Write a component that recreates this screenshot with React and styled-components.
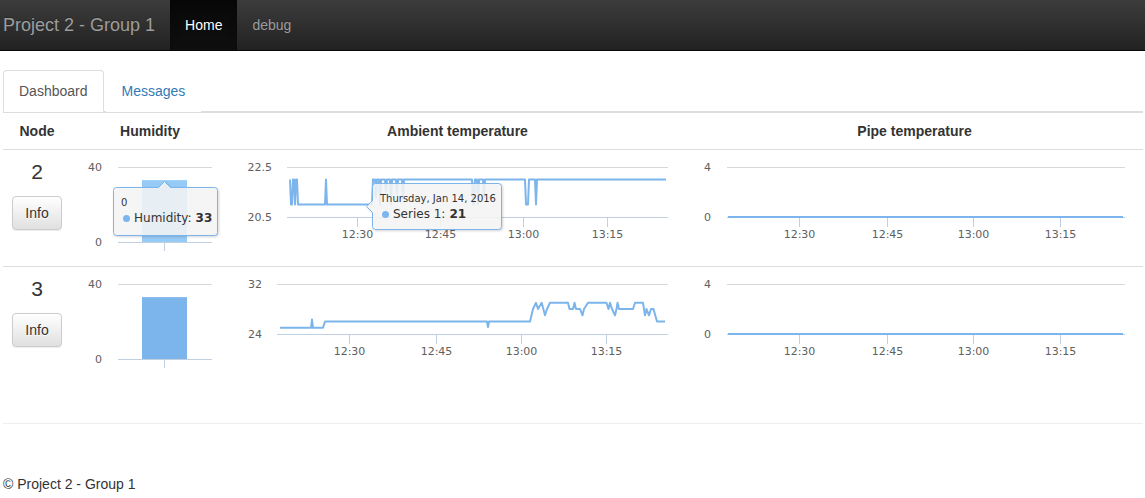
import React from "react"
import styled, { createGlobalStyle } from "styled-components"

const GlobalStyle = createGlobalStyle`
  * { box-sizing: border-box; }
  body {
    margin: 0;
    font-family: "Liberation Sans", Arial, sans-serif;
    font-size: 14px;
    line-height: 20px;
    color: #333;
    background: #fff;
  }
`

const BLUE = "#7cb5ec"

const Navbar = styled.nav`
  display: flex;
  height: 51px;
  background: linear-gradient(to bottom, #3c3c3c 0%, #222 100%);
  border-bottom: 1px solid #080808;
`

const Brand = styled.a`
  padding: 0 15px 0 3px;
  font-size: 18px;
  line-height: 50px;
  color: #9d9d9d;
  text-shadow: 0 -1px 0 rgba(0, 0, 0, 0.25);
`

const NavLink = styled.a`
  padding: 0 15px;
  line-height: 50px;
  color: ${({ $active }) => ($active ? "#fff" : "#9d9d9d")};
  background: ${({ $active }) =>
    $active ? "linear-gradient(to bottom, #080808 0%, #0f0f0f 100%)" : "none"};
  box-shadow: ${({ $active }) => ($active ? "inset 0 3px 9px rgba(0,0,0,.25)" : "none")};
  text-shadow: 0 -1px 0 rgba(0, 0, 0, 0.25);
`

const Main = styled.main`
  padding: 19px 2px 0 3px;
`

const Tabs = styled.ul`
  display: flex;
  margin: 0;
  padding: 0;
  list-style: none;
  border-bottom: 1px solid #ddd;
`

const Tab = styled.li`
  margin: 0 2px -1px 0;
  padding: 10px 15px;
  border: 1px solid ${({ $active }) => ($active ? "#ddd" : "transparent")};
  border-bottom-color: transparent;
  border-radius: 4px 4px 0 0;
  background: #fff;
  color: ${({ $active }) => ($active ? "#555" : "#337ab7")};
`

const Table = styled.div`
  display: flex;
  flex-direction: column;
  margin-bottom: 20px;
`

const Row = styled.div`
  display: grid;
  grid-template-columns: 68px 158px 1fr 1fr;
  border-top: ${({ $noTop }) => ($noTop ? "0" : "1px solid #ddd")};
`

const HeadRow = styled(Row)`
  border-bottom: 1px solid #ddd;
`

const Th = styled.div`
  padding: 8px;
  font-weight: bold;
  text-align: center;
`

const Cell = styled.div`
  position: relative;
  height: 116px;
`

const NodeCell = styled(Cell)`
  display: flex;
  flex-direction: column;
  align-items: center;
  padding-top: 8px;
`

const NodeNum = styled.div`
  font-size: 21px;
  line-height: 27px;
`

const InfoButton = styled.button`
  margin-top: 11px;
  padding: 6px 12px;
  font: 14px/20px "Liberation Sans", Arial, sans-serif;
  color: #333;
  background: linear-gradient(to bottom, #fff 0%, #e0e0e0 100%);
  border: 1px solid #ccc;
  border-radius: 4px;
  box-shadow: inset 0 1px 0 rgba(255, 255, 255, 0.15), 0 1px 1px rgba(0, 0, 0, 0.075);
  text-shadow: 0 1px 0 #fff;
`

const ChartSvg = styled.svg`
  display: block;
  overflow: visible;
`

const AxisText = styled.text`
  font-family: "DejaVu Sans", Verdana, sans-serif;
  font-size: 11px;
  fill: #606060;
`

const Tooltip = styled.div`
  position: absolute;
  left: ${({ $x }) => $x}px;
  top: ${({ $y }) => $y}px;
  width: ${({ $w }) => $w}px;
  height: ${({ $h }) => $h}px;
  font-family: "DejaVu Sans", Verdana, sans-serif;
  color: #333;
  white-space: nowrap;
`

const TipShape = styled.svg`
  position: absolute;
  inset: 0;
  overflow: visible;
  filter: drop-shadow(1px 1px 1px rgba(0, 0, 0, 0.18));
`

const TipBody = styled.div`
  position: relative;
  padding: 9px 8px 0 8px;
`

const TipTitle = styled.div`
  font-size: 10px;
  line-height: 14px;
`

const TipLine = styled.div`
  display: flex;
  align-items: center;
  font-size: 12px;
  line-height: 16px;
  b { margin-left: 4px; }
`

const Dot = styled.span`
  flex: 0 0 7px;
  width: 7px;
  height: 7px;
  margin: 0 4px 0 2px;
  border-radius: 50%;
  background: ${BLUE};
`

const Rule = styled.hr`
  margin: 40px 0 20px;
  border: 0;
  border-top: 1px solid #eee;
`

const Footer = styled.footer`
  padding-top: 30px;
`

function calloutPath(w, h, side, pos) {
  const r = 3
  const W = w - 1
  const H = h - 1
  if (side === "top") {
    return `M${r} 0 L${pos - 6} 0 L${pos} -6 L${pos + 6} 0 L${W - r} 0 Q${W} 0 ${W} ${r} L${W} ${H - r} Q${W} ${H} ${W - r} ${H} L${r} ${H} Q0 ${H} 0 ${H - r} L0 ${r} Q0 0 ${r} 0 Z`
  }
  return `M${r} 0 L${W - r} 0 Q${W} 0 ${W} ${r} L${W} ${H - r} Q${W} ${H} ${W - r} ${H} L${r} ${H} Q0 ${H} 0 ${H - r} L0 ${pos + 6} L-6 ${pos} L0 ${pos - 6} L0 ${r} Q0 0 ${r} 0 Z`
}

const Tip = ({ x, y, w, h, side, pos, title, label, value }) => (
  <Tooltip $x={x} $y={y} $w={w} $h={h}>
    <TipShape width={w} height={h}>
      <g transform="translate(0.5 0.5)">
        <path d={calloutPath(w, h, side, pos)} fill="rgba(249,249,249,0.85)" stroke={BLUE} />
      </g>
    </TipShape>
    <TipBody>
      <TipTitle>{title}</TipTitle>
      <TipLine>
        <Dot />
        {label}:<b>{value}</b>
      </TipLine>
    </TipBody>
  </Tooltip>
)

const TIMES = ["12:30", "12:45", "13:00", "13:15"]

const LineChart = ({ width, colLeft, labelX, plotL, plotR, ticks, yLabels, min, max, points }) => {
  const toY = v => 67 - ((v - min) / (max - min)) * 50
  const d = points
    .map(([x, v], i) => `${i ? "L" : "M"}${(x - colLeft).toFixed(1)} ${toY(v).toFixed(1)}`)
    .join(" ")
  return (
    <ChartSvg width={width} height={116}>
      <line x1={plotL} x2={plotR} y1={17.5} y2={17.5} stroke="#d8d8d8" />
      <line x1={plotL} x2={plotR} y1={67.5} y2={67.5} stroke="#c0d0e0" />
      {ticks.map(t => (
        <line key={t} x1={t + 0.5} x2={t + 0.5} y1={67} y2={77} stroke="#c0d0e0" />
      ))}
      <AxisText x={labelX} y={21} textAnchor="end">{yLabels[0]}</AxisText>
      <AxisText x={labelX} y={71} textAnchor="end">{yLabels[1]}</AxisText>
      {ticks.map((t, i) => (
        <AxisText key={t} x={t + 0.5} y={87.5} textAnchor="middle">{TIMES[i]}</AxisText>
      ))}
      <path d={d} fill="none" stroke={BLUE} strokeWidth={2} strokeLinejoin="round" />
    </ChartSvg>
  )
}

const BarChart = ({ value, hovered }) => {
  const top = 92 - (value / 40) * 75
  return (
    <ChartSvg width={158} height={116}>
      <line x1={47} x2={141} y1={17.5} y2={17.5} stroke="#d8d8d8" />
      <rect x={71} y={top} width={45} height={92 - top} fill={hovered ? "#96cbf8" : BLUE} />
      <line x1={47} x2={141} y1={92.5} y2={92.5} stroke="#c0d0e0" />
      <line x1={93.5} x2={93.5} y1={92} y2={101} stroke="#c0d0e0" />
      <AxisText x={31} y={21} textAnchor="end">40</AxisText>
      <AxisText x={31} y={96} textAnchor="end">0</AxisText>
    </ChartSvg>
  )
}

const amb1 = [
  [290, 22], [291, 21], [292, 21], [293, 22], [294, 22], [295, 21], [296, 22], [297, 22], [298, 21],
  [325, 21], [326, 22], [327, 21], [372, 21], [373, 22], [375, 22], [376, 21.3], [377, 22], [379, 22],
  [380, 21], [381, 22], [385, 22], [386, 21.5], [387, 22], [390, 22], [391, 21], [392, 22], [396, 22],
  [397, 21.4], [398, 22], [402, 22], [403, 21.2], [404, 22], [472, 22], [473, 21], [474, 21], [475, 22],
  [477, 22], [478, 21], [479, 22], [483, 22], [484, 21.3], [485, 22], [525, 22], [526, 21], [528, 21],
  [529, 22], [535, 22], [536, 21], [537, 22], [666, 22],
]

const amb2 = [
  [280, 25], [311, 25], [312, 26.3], [313, 25], [323, 25], [325, 26], [487, 26], [488, 25.1], [489, 26],
  [530, 26], [533, 28], [536, 29], [538, 28], [541.7, 29], [545, 27], [547, 28], [550, 29], [568, 29],
  [569.5, 28], [573, 28], [574.5, 29], [576, 28], [580, 28], [582.5, 27], [584, 28], [588, 29],
  [606.5, 29], [608.5, 28], [610, 29], [612, 28], [615, 27], [616.5, 28], [617.5, 29], [619, 28],
  [633, 28], [635, 29], [643, 29], [645, 27], [646.5, 28], [649, 27], [651, 28], [653.5, 28],
  [657, 26], [665, 26],
]

const pipe = [[728, 0], [1123, 0]]

const PipeChart = () => (
  <LineChart
    width={457} colLeft={686} labelX={25} plotL={41} plotR={439}
    ticks={[113, 201, 287, 374]} yLabels={["4", "0"]} min={0} max={4} points={pipe}
  />
)

export default function App() {
  return (
    <>
      <GlobalStyle />
      <Navbar>
        <Brand>Project 2 - Group 1</Brand>
        <NavLink $active>Home</NavLink>
        <NavLink>debug</NavLink>
      </Navbar>
      <Main>
        <Tabs>
          <Tab $active>Dashboard</Tab>
          <Tab>Messages</Tab>
        </Tabs>
        <Table>
          <HeadRow>
            <Th>Node</Th>
            <Th>Humidity</Th>
            <Th>Ambient temperature</Th>
            <Th>Pipe temperature</Th>
          </HeadRow>
          <Row $noTop>
            <NodeCell>
              <NodeNum>2</NodeNum>
              <InfoButton>Info</InfoButton>
            </NodeCell>
            <Cell>
              <BarChart value={33} hovered />
              <Tip x={42} y={37} w={105} h={49} side="top" pos={51} title="0" label="Humidity" value="33" />
            </Cell>
            <Cell>
              <LineChart
                width={457} colLeft={229} labelX={43} plotL={58} plotR={439}
                ticks={[128, 211, 294, 378]} yLabels={["22.5", "20.5"]} min={20.5} max={22.5} points={amb1}
              />
              <Tip x={143} y={33} w={130} h={47} side="left" pos={23} title="Thursday, Jan 14, 2016" label="Series 1" value="21" />
            </Cell>
            <Cell>
              <PipeChart />
            </Cell>
          </Row>
          <Row>
            <NodeCell>
              <NodeNum>3</NodeNum>
              <InfoButton>Info</InfoButton>
            </NodeCell>
            <Cell>
              <BarChart value={33} />
            </Cell>
            <Cell>
              <LineChart
                width={457} colLeft={229} labelX={33} plotL={48} plotR={439}
                ticks={[120, 207, 292, 377]} yLabels={["32", "24"]} min={24} max={32} points={amb2}
              />
            </Cell>
            <Cell>
              <PipeChart />
            </Cell>
          </Row>
        </Table>
        <Rule />
        <Footer>© Project 2 - Group 1</Footer>
      </Main>
    </>
  )
}
